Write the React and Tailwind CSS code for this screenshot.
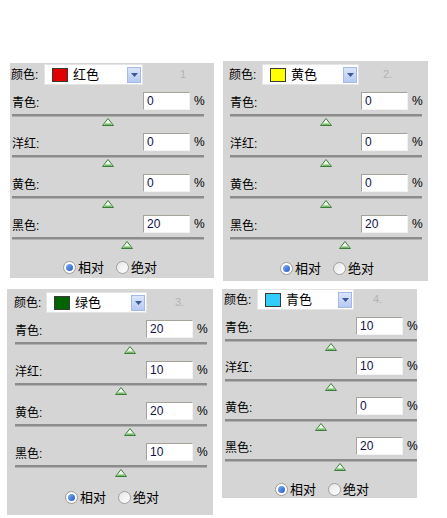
const panels = [
  { num: '1', name: '红色', swatch: '#e00000', values: [0, 0, 0, 20], w: 204, h: 215, pt: 1, pl: 2, ddL: 34, ddW: 99, numMl: 37, pitch: 41, radioMt: 0, radioPl: 53 },
  { num: '2.', name: '黄色', swatch: '#ffff00', values: [0, 0, 0, 20], w: 205, h: 220, pt: 3, pl: 7, ddL: 39, ddW: 97, numMl: 24, pitch: 41, radioMt: 0, radioPl: 57 },
  { num: '3.', name: '绿色', swatch: '#006400', values: [20, 10, 20, 10], w: 206, h: 226, pt: 3, pl: 8, ddL: 39, ddW: 101, numMl: 28, pitch: 41, radioMt: 1, radioPl: 58 },
  { num: '4.', name: '青色', swatch: '#33ccff', values: [10, 10, 0, 20], w: 195, h: 209, pt: 0, pl: 3, ddL: 35, ddW: 97, numMl: 19, pitch: 40, radioMt: 4, radioPl: 53 },
];

const labels = ['青色:', '洋红:', '黄色:', '黑色:'];

function Thumb({ value }) {
  // slider runs -100..100 over 192px
  const left = ((value + 100) / 200) * 192 - 6;
  return (
    <div className="relative h-[8px] mt-[1px]">
      <svg width="12" height="8" viewBox="0 0 12 8" className="absolute top-0" style={{ left }}>
        <polygon points="6,0.5 11.5,7.5 0.5,7.5" fill="#eef8ea" stroke="#3b7d3b" strokeWidth="1" />
        <polygon points="3,5.5 9,5.5 10,7 2,7" fill="#79b86a" />
      </svg>
    </div>
  );
}

function Row({ label, value, pitch }) {
  return (
    <div className="flex flex-col w-[192px]" style={{ height: pitch }}>
      <div className="flex items-center justify-between h-[18px]">
        <span className="text-[12px] text-black leading-none pt-[3px]">{label}</span>
        <div className="flex items-center">
          <div className="w-[47px] h-[18px] bg-white border-t border-l border-[#a3a39a] border-r border-r-[#f2f2f2] border-b border-b-[#f2f2f2] text-[12px] leading-[16px] pl-[3px] text-[#10104a]">
            {value}
          </div>
          <span className="ml-[4px] w-[10px] text-[12px] text-black leading-none">%</span>
        </div>
      </div>
      <div className="mt-[4px] h-[3px] bg-[#8c8c8c] border-b border-b-[#b0b0b0]" />
      <Thumb value={value} />
    </div>
  );
}

function Radio({ checked, label }) {
  return (
    <div className="flex items-center">
      <div
        className={
          checked
            ? 'w-[13px] h-[13px] rounded-full border border-[#9a9a9a] bg-white flex items-center justify-center'
            : 'w-[13px] h-[13px] rounded-full border border-[#a0a0a0] bg-gradient-to-br from-[#e6e6e6] to-white'
        }
      >
        {checked && <div className="w-[7px] h-[7px] rounded-full bg-gradient-to-br from-[#7fb0f0] to-[#2457c8]" />}
      </div>
      <span className="ml-[2px] text-[13px] text-black leading-none">{label}</span>
    </div>
  );
}

function Panel({ p, className }) {
  return (
    <div className={'bg-[#d5d5d5] flex flex-col shrink-0 ' + className} style={{ width: p.w, height: p.h, paddingTop: p.pt }}>
      <div className="flex items-center h-[21px]">
        <span className="text-[12px] text-black leading-none" style={{ marginLeft: p.pl - 1, width: p.ddL - p.pl + 1 }}>
          颜色:
        </span>
        <div className="h-[21px] bg-white border border-[#e4e4e4] flex items-center relative" style={{ width: p.ddW }}>
          <div className="ml-[7px] w-[16px] h-[14px] border border-[#3a3a3a]" style={{ background: p.swatch }} />
          <span className="ml-[5px] text-[13px] text-black leading-none">{p.name}</span>
          <div className="ml-auto mr-[1px] w-[14px] h-[16px] bg-gradient-to-b from-[#dce6fb] to-[#b5c9f2] border border-[#a5b9e6] flex items-center justify-center">
            <svg width="7" height="4" viewBox="0 0 7 4">
              <polygon points="0,0 7,0 3.5,4" fill="#3b5897" />
            </svg>
          </div>
        </div>
        <span className="text-[11px] text-[#b2b2b2] leading-none" style={{ marginLeft: p.numMl }}>
          {p.num}
        </span>
      </div>
      <div className="flex flex-col mt-[7px]" style={{ marginLeft: p.pl }}>
        {labels.map((l, i) => (
          <Row key={l} label={l} value={p.values[i]} pitch={p.pitch} />
        ))}
      </div>
      <div className="flex items-center h-[24px] gap-[12px]" style={{ marginTop: p.radioMt, paddingLeft: p.radioPl }}>
        <Radio checked label="相对" />
        <Radio label="绝对" />
      </div>
    </div>
  );
}

export default function App() {
  return (
    <div className="w-[447px] h-[518px] bg-white overflow-hidden font-['Liberation_Sans','Noto_Sans_CJK_SC',sans-serif]">
      <div className="flex items-start pt-[61px] pl-[10px]">
        <Panel p={panels[0]} className="mt-[2px]" />
        <Panel p={panels[1]} className="ml-[9px]" />
      </div>
      <div className="flex items-start mt-[8px] pl-[7px]">
        <Panel p={panels[2]} className="" />
        <Panel p={panels[3]} className="ml-[9px]" />
      </div>
    </div>
  );
}
